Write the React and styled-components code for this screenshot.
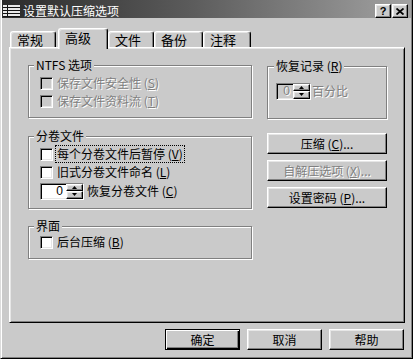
import React from 'react';
import styled, { createGlobalStyle, css } from 'styled-components';

const FACE = '#cacaca';

const GlobalStyle = createGlobalStyle`
  html, body {
    margin: 0;
    padding: 0;
    background: ${FACE};
  }
  body {
    font-family: "Noto Sans CJK SC", "Liberation Sans", sans-serif;
    font-size: 12px;
    color: #000;
  }
`;

const raised = css`
  border-style: solid;
  border-width: 1px;
  border-color: #fff #000 #000 #fff;
  box-shadow: inset -1px -1px 0 #808080, inset 1px 1px 0 #e6e6e6;
`;

const sunken = css`
  border-style: solid;
  border-width: 1px;
  border-color: #808080 #fff #fff #808080;
  box-shadow: inset 1px 1px 0 #000, inset -1px -1px 0 #e6e6e6;
`;

const disabledText = css`
  color: #808080;
  text-shadow: 1px 1px 0 #fff;
`;

const Window = styled.div`
  width: 413px;
  height: 359px;
  box-sizing: border-box;
  display: flex;
  flex-direction: column;
  padding: 0 1px 1px 1px;
  background: ${FACE};
  border-left: 1px solid #dcdcdc;
  border-right: 1px solid #000;
  border-bottom: 1px solid #000;
  box-shadow: inset 1px 0 0 #fff, inset -1px -1px 0 #808080;
`;

const TitleBar = styled.div`
  height: 18px;
  box-sizing: border-box;
  padding: 4px 3px 0 1px;
  display: flex;
  align-items: center;
  background: linear-gradient(to right, #2a2a2a 0%, #5a5a5a 45%, #a2a2a2 100%);
`;

const Title = styled.span`
  flex: 1;
  margin-left: 3px;
  color: #fff;
  font-size: 12px;
  line-height: 14px;
`;

const CaptionButton = styled.div`
  width: 16px;
  height: 14px;
  box-sizing: border-box;
  margin-left: 1px;
  display: flex;
  align-items: center;
  justify-content: center;
  background: ${FACE};
  font-family: "Liberation Sans", sans-serif;
  font-weight: bold;
  font-size: 11px;
  ${raised};
`;

const Body = styled.div`
  flex: 1;
  display: flex;
  flex-direction: column;
  padding: 10px 6px 0 7px;
`;

const TabRow = styled.div`
  height: 19px;
  display: flex;
  align-items: flex-end;
  padding-left: 1px;
`;

const Tab = styled.div`
  position: relative;
  z-index: ${(p) => (p.$active ? 2 : 1)};
  box-sizing: border-box;
  width: ${(p) => p.$width}px;
  height: ${(p) => (p.$active ? 21 : 16)}px;
  margin-left: ${(p) => (p.$active ? 2 : 0)}px;
  margin-bottom: ${(p) => (p.$active ? -2 : 0)}px;
  padding: 0 0 ${(p) => (p.$active ? 2 : 0)}px 6px;
  display: flex;
  align-items: center;
  background: ${FACE};
  border-top: 1px solid #fff;
  border-left: 1px solid #fff;
  border-right: 1px solid #000;
  border-radius: 3px 3px 0 0;
  box-shadow: inset -1px 0 0 #808080, inset 1px 1px 0 #e6e6e6;
  font-size: 13px;
  line-height: 14px;
`;

const Panel = styled.div`
  box-sizing: border-box;
  width: 396px;
  height: 276px;
  display: flex;
  gap: 14px;
  padding: 17px 0 0 18px;
  background: ${FACE};
  border-style: solid;
  border-width: 1px;
  border-color: #fff #000 #000 #fff;
  box-shadow: inset 1px 1px 0 #e6e6e6, inset -1px -1px 0 #808080;
`;

const Column = styled.div`
  width: ${(p) => p.$width}px;
  display: flex;
  flex-direction: column;
`;

const Group = styled.div`
  position: relative;
  margin-top: ${(p) => p.$gap || 0}px;
  margin-right: 1px;
  padding: ${(p) => p.$pad};
  border: 1px solid #808080;
  box-shadow: inset 1px 1px 0 #fff, 1px 1px 0 #fff;
`;

const Legend = styled.span`
  position: absolute;
  top: -8px;
  left: ${(p) => p.$left || 5}px;
  padding: 0 2px;
  background: ${FACE};
  line-height: 14px;
`;

const Row = styled.div`
  height: ${(p) => p.$height || 18}px;
  display: flex;
  align-items: center;
`;

const CheckBox = styled.span`
  width: 13px;
  height: 13px;
  box-sizing: border-box;
  margin-right: 3px;
  background: ${(p) => (p.$disabled ? FACE : '#fff')};
  ${sunken};
`;

const Label = styled.span`
  padding: 1px 1px;
  line-height: 14px;
  white-space: nowrap;
  ${(p) => p.$disabled && disabledText};
  ${(p) => p.$focused && 'outline: 1px dotted #000;'};
  margin-left: ${(p) => p.$gap || 0}px;
`;

const Key = styled.u`
  text-underline-offset: 1px;
`;

const SpinBox = styled.div`
  width: ${(p) => p.$width}px;
  height: 17px;
  box-sizing: border-box;
  display: flex;
  align-items: stretch;
  justify-content: flex-end;
  background: ${(p) => (p.$disabled ? FACE : '#fff')};
  ${sunken};
`;

const SpinValue = styled.span`
  display: flex;
  align-items: center;
  padding: 0 3px;
  font-family: "Liberation Sans", sans-serif;
  font-size: 12px;
  ${(p) => p.$disabled && disabledText};
`;

const SpinButtons = styled.div`
  width: 17px;
  display: flex;
  flex-direction: column;
`;

const SpinButton = styled.div`
  flex: 1;
  box-sizing: border-box;
  display: flex;
  align-items: center;
  justify-content: center;
  background: ${FACE};
  ${raised};
`;

const Button = styled.div`
  width: ${(p) => p.$width}px;
  height: 21px;
  box-sizing: border-box;
  margin-top: ${(p) => p.$gap || 0}px;
  display: flex;
  align-items: center;
  justify-content: center;
  background: ${FACE};
  white-space: nowrap;
  ${raised};
  ${(p) => p.$disabled && disabledText};
  ${(p) =>
    p.$default &&
    css`
      border-color: #000;
      box-shadow: inset 1px 1px 0 #fff, inset -1px -1px 0 #000, inset -2px -2px 0 #808080;
    `};
`;

const Footer = styled.div`
  display: flex;
  justify-content: flex-end;
  gap: 7px;
  margin-top: 6px;
  padding-right: 1px;
`;

const WindowIcon = () => (
  <svg width="17" height="12" viewBox="0 0 17 12">
    <rect x="0" y="0" width="17" height="12" fill="#111" />
    {[0, 3, 6, 9].map((y) => (
      <g key={y}>
        <rect x="0" y={y} width="4" height="2" fill="#e8e8e8" />
        <rect x="5" y={y} width="12" height="2" fill="#e8e8e8" />
      </g>
    ))}
  </svg>
);

const CloseGlyph = () => (
  <svg width="8" height="7" viewBox="0 0 8 7">
    <path d="M0.5 0.5 L7.5 6.5 M7.5 0.5 L0.5 6.5" stroke="#000" strokeWidth="1.8" />
  </svg>
);

const Arrow = ({ up }) => (
  <svg width="5" height="3" viewBox="0 0 5 3">
    <path d={up ? 'M2.5 0 L5 3 L0 3 Z' : 'M0 0 L5 0 L2.5 3 Z'} fill="#000" />
  </svg>
);

const Spinner = ({ width, disabled }) => (
  <SpinBox $width={width} $disabled={disabled}>
    <SpinValue $disabled={disabled}>0</SpinValue>
    <SpinButtons>
      <SpinButton>
        <Arrow up />
      </SpinButton>
      <SpinButton>
        <Arrow />
      </SpinButton>
    </SpinButtons>
  </SpinBox>
);

const Check = ({ label, hotkey, disabled, focused }) => (
  <Row>
    <CheckBox $disabled={disabled} />
    <Label $disabled={disabled} $focused={focused}>
      {label} (<Key>{hotkey}</Key>)
    </Label>
  </Row>
);

const tabs = [
  { label: '常规', width: 46 },
  { label: '高级', width: 50, active: true },
  { label: '文件', width: 46 },
  { label: '备份', width: 49 },
  { label: '注释', width: 48 },
];

const App = () => {
  return (
    <>
      <GlobalStyle />
      <Window>
        <TitleBar>
          <WindowIcon />
          <Title>设置默认压缩选项</Title>
          <CaptionButton>?</CaptionButton>
          <CaptionButton>
            <CloseGlyph />
          </CaptionButton>
        </TitleBar>
        <Body>
          <TabRow>
            {tabs.map((t) => (
              <Tab key={t.label} $width={t.width} $active={t.active}>
                {t.label}
              </Tab>
            ))}
          </TabRow>
          <Panel>
            <Column $width={225}>
              <Group $pad="8px 0 7px 11px">
                <Legend>NTFS 选项</Legend>
                <Check label="保存文件安全性" hotkey="S" disabled />
                <Check label="保存文件资料流" hotkey="T" disabled />
              </Group>
              <Group $gap={18} $pad="8px 0 7px 11px">
                <Legend>分卷文件</Legend>
                <Check label="每个分卷文件后暂停" hotkey="V" focused />
                <Check label="旧式分卷文件命名" hotkey="L" />
                <Row $height={20}>
                  <Spinner width={44} />
                  <Label $gap={2}>
                    恢复分卷文件 (<Key>C</Key>)
                  </Label>
                </Row>
              </Group>
              <Group $gap={17} $pad="6px 0 7px 11px">
                <Legend>界面</Legend>
                <Check label="后台压缩" hotkey="B" />
              </Group>
            </Column>
            <Column $width={121}>
              <Group $gap={1} $pad="15px 0 18px 8px">
                <Legend $left={6}>
                  恢复记录 (<Key>R</Key>)
                </Legend>
                <Row>
                  <Spinner width={35} disabled />
                  <Label $disabled>百分比</Label>
                </Row>
              </Group>
              <Button $width={120} $gap={14}>
                压缩 (<Key>C</Key>)...
              </Button>
              <Button $width={120} $gap={6} $disabled>
                自解压选项 (<Key>X</Key>)...
              </Button>
              <Button $width={120} $gap={6}>
                设置密码 (<Key>P</Key>)...
              </Button>
            </Column>
          </Panel>
          <Footer>
            <Button $width={75} $default>
              确定
            </Button>
            <Button $width={75}>取消</Button>
            <Button $width={75}>帮助</Button>
          </Footer>
        </Body>
      </Window>
    </>
  );
};

export default App;
